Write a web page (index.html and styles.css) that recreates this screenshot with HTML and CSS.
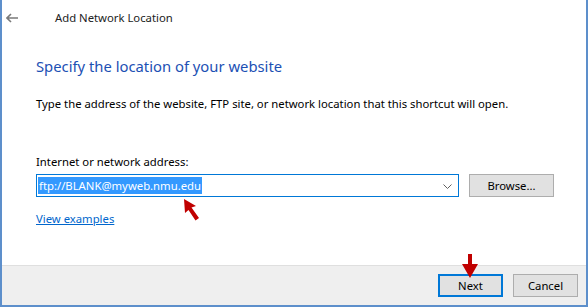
FILE: index.html
```html
<!DOCTYPE html>
<html lang="en">
<head>
  <meta charset="UTF-8">
  <title>Add Network Location</title>
  <link rel="stylesheet" href="styles.css">
</head>
<body>
  <div class="window">
    <div class="titlebar">
      <svg class="back" width="12" height="10" viewBox="0 0 12 10">
        <path d="M5 1 L1 5 L5 9 M1 5 H12" fill="none" stroke="#7a7a7a" stroke-width="1.6"/>
      </svg>
      <span class="title">Add Network Location</span>
    </div>

    <div class="content">
      <h1>Specify the location of your website</h1>
      <p class="desc">Type the address of the website, FTP site, or network location that this shortcut will open.</p>

      <label class="label">Internet or network address:</label>
      <div class="address-row">
        <div class="combo">
          <span class="selected">ftp://BLANK@myweb.nmu.edu</span>
          <svg class="chevron" width="9" height="5" viewBox="0 0 9 5">
            <path d="M0.5 0.5 L4.5 4.5 L8.5 0.5" fill="none" stroke="#606060" stroke-width="1"/>
          </svg>
          <svg class="pointer" width="18" height="24" viewBox="0 0 18 24">
            <path d="M1 1 L13 8 L8.5 9.5 L16 20 L12.5 22.5 L5.5 12 L2 15 Z" fill="#c00000"/>
          </svg>
        </div>
        <button class="btn">Browse...</button>
      </div>

      <a class="link" href="#">View examples</a>
    </div>

    <div class="footer">
      <div class="next-wrap">
        <svg class="down-arrow" width="18" height="25" viewBox="0 0 18 25">
          <path d="M7 0 H11 V10 H17 L9 24 L1 10 H7 Z" fill="#c00000"/>
        </svg>
        <button class="btn default">Next</button>
      </div>
      <button class="btn">Cancel</button>
    </div>
  </div>
</body>
</html>
```

FILE: styles.css
```css
/* Dialog frame */
body {
  margin: 0;
  font-family: 'Noto Sans', 'Liberation Sans', sans-serif;
  font-size: 11.3px;
  color: #000;
  background: #fff;
}

.window {
  width: 588px;
  height: 307px;
  box-sizing: border-box;
  border: 2px solid #5d8fcb;
  border-top: none;
  display: flex;
  flex-direction: column;
  background: #fff;
}

/* Title bar */
.titlebar {
  height: 35px;
  display: flex;
  align-items: center;
  padding-left: 4px;
}

.back {
  margin-right: 37px;
}

.title {
  color: #222;
}

/* Main content */
.content {
  flex: 1;
  padding-left: 34px;
}

h1 {
  margin: 21px 0 0;
  font-size: 14.8px;
  font-weight: normal;
  color: #1c50b4;
}

.desc {
  margin: 20px 0 0;
}

.label {
  display: block;
  margin-top: 43px;
}

.address-row {
  display: flex;
  align-items: center;
  margin-top: 5px;
}

.combo {
  position: relative;
  width: 423px;
  height: 23px;
  box-sizing: border-box;
  border: 1px solid #0078d7;
  display: flex;
  align-items: center;
  padding-left: 1px;
}

.selected {
  background: #3399ff;
  color: #fff;
  line-height: 17px;
  padding: 0 1px;
}

.chevron {
  position: absolute;
  right: 6px;
  top: 9px;
}

.pointer {
  position: absolute;
  left: 146px;
  top: 23px;
}

.btn {
  font-family: inherit;
  font-size: 11.3px;
  color: #000;
  background: #e1e1e1;
  border: 1px solid #adadad;
  height: 23px;
  width: 85px;
  padding: 0;
  margin-left: 10px;
}

.link {
  display: inline-block;
  margin-top: 14px;
  color: #0066cc;
}

/* Footer */
.footer {
  height: 39px;
  background: #efefef;
  border-top: 1px solid #dfdfdf;
  display: flex;
  align-items: center;
  justify-content: flex-end;
  padding-right: 8px;
}

.footer .btn {
  width: 65px;
}

.next-wrap {
  position: relative;
}

.btn.default {
  border: 2px solid #0078d7;
}

.down-arrow {
  position: absolute;
  left: 33px;
  top: -20px;
}
```
